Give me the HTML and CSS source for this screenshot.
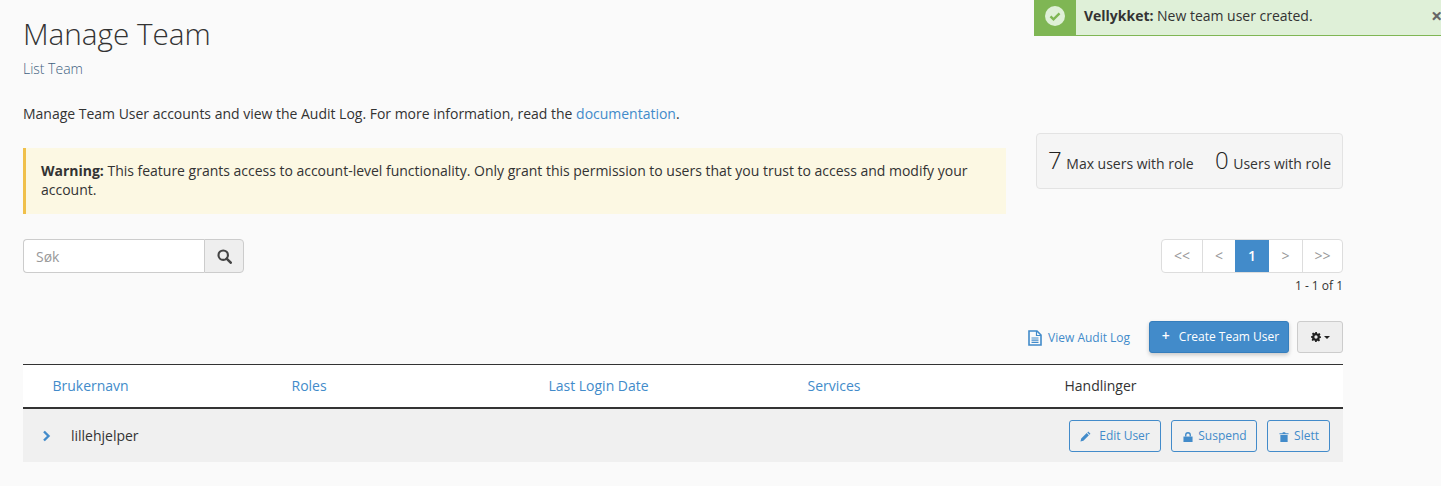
FILE: index.html
```html
<!DOCTYPE html>
<html lang="no">
<head>
<meta charset="utf-8">
<title>Manage Team</title>
<link rel="stylesheet" href="styles.css">
</head>
<body>
<div class="toast">
  <div class="toast-icon">
    <svg width="20" height="20" viewBox="0 0 20 20"><circle cx="10" cy="10" r="10" fill="#dff0d8"/><path d="M5.5 10.3l3 3 6-6" fill="none" stroke="#7fb654" stroke-width="2.4"/></svg>
  </div>
  <div class="toast-text"><strong>Vellykket:</strong> New team user created.</div>
  <div class="toast-close">×</div>
</div>
<main class="page">
  <h1 class="title">Manage Team</h1>
  <div class="subtitle">List Team</div>
  <p class="intro">Manage Team User accounts and view the Audit Log. For more information, read the <a href="#">documentation</a>.</p>
  <div class="notice-row">
    <div class="warning"><strong>Warning:</strong> This feature grants access to account-level functionality. Only grant this permission to users that you trust to access and modify your account.</div>
    <div class="stats">
      <span class="stat"><span class="stat-num">7</span> Max users with role</span>
      <span class="stat"><span class="stat-num">0</span> Users with role</span>
    </div>
  </div>
  <div class="search-row">
    <div class="search">
      <input class="search-input" type="text" placeholder="Søk">
      <button class="search-btn" type="button">
        <svg width="15" height="15" viewBox="0 0 14 14"><circle cx="5.8" cy="5.8" r="4.4" fill="none" stroke="#444" stroke-width="2"/><path d="M9 9l3.8 3.8" stroke="#444" stroke-width="2.4" stroke-linecap="round"/></svg>
      </button>
    </div>
    <div class="paging">
      <div class="pager">
        <span class="page-item first">&lt;&lt;</span>
        <span class="page-item prev">&lt;</span>
        <span class="page-item current">1</span>
        <span class="page-item next">&gt;</span>
        <span class="page-item last">&gt;&gt;</span>
      </div>
      <div class="page-count">1 - 1 of 1</div>
    </div>
  </div>
  <div class="actions">
    <a class="audit" href="#">
      <svg width="14" height="16" viewBox="0 0 14 16"><path d="M1 1h8l4 4v10H1z" fill="none" stroke="#428bca" stroke-width="1.6"/><path d="M8.5 1v4.5H13M3.5 8h7M3.5 10.2h7M3.5 12.4h7" fill="none" stroke="#428bca" stroke-width="1.2"/></svg>
      <span>View Audit Log</span>
    </a>
    <button class="create" type="button"><span class="create-label"><span class="plus">+</span>Create Team User</span></button>
    <button class="gear" type="button">
      <svg width="10" height="10" viewBox="0 0 24 24"><path fill="#222" d="M10 0h4l.7 3.4 2.3 1 2.9-1.9 2.8 2.8-1.9 2.9 1 2.3L24 10v4l-3.2.7-1 2.3 1.9 2.9-2.8 2.8-2.9-1.9-2.3 1L14 24h-4l-.7-3.2-2.3-1-2.9 1.9-2.8-2.8 1.9-2.9-1-2.3L0 14v-4l3.2-.7 1-2.3-1.9-2.9 2.8-2.8 2.9 1.9 2.3-1zM12 8a4 4 0 1 0 0 8 4 4 0 0 0 0-8z" fill-rule="evenodd"/></svg>
      <span class="caret"></span>
    </button>
  </div>
  <section class="table">
    <div class="thead">
      <a class="th th-name" href="#">Brukernavn</a>
      <a class="th th-roles" href="#">Roles</a>
      <a class="th th-login" href="#">Last Login Date</a>
      <a class="th th-services" href="#">Services</a>
      <span class="th th-actions">Handlinger</span>
    </div>
    <div class="row">
      <svg class="chev" width="9" height="12" viewBox="0 0 9 12"><path d="M2 1.5L6.5 6 2 10.500" fill="none" stroke="#428bca" stroke-width="2.400"/></svg>
      <span class="username">lillehjelper</span>
      <div class="row-actions">
        <button class="row-btn edit" type="button">
          <svg class="icon-low" width="11" height="11" viewBox="0 0 12 12"><path fill="#428bca" d="M0.500 11.500l.8-3.200 6-6 2.400 2.400-6 6zM8 1.600l1-1 2.400 2.400-1 1z"/></svg>
          <span class="btn-label">Edit User</span>
        </button>
        <button class="row-btn suspend" type="button">
          <svg class="icon-low" width="10" height="10" viewBox="0 0 10 11"><path fill="#428bca" d="M0 5h10v6H0z"/><path d="M2.500 5V3.300a2.500 2.500 0 0 1 5 0V5" fill="none" stroke="#428bca" stroke-width="1.500"/></svg>
          <span class="btn-label">Suspend</span>
        </button>
        <button class="row-btn delete" type="button">
          <svg class="icon-low" width="10" height="10" viewBox="0 0 10 11"><path fill="#428bca" d="M1 3.200h8V11H1zM0 1.500h3.200L3.800.3h2.400l.6 1.200H10v1H0z"/></svg>
          <span class="btn-label">Slett</span>
        </button>
      </div>
    </div>
  </section>
</main>
</body>
</html>
```
FILE: styles.css
```css
* { box-sizing: border-box; }
html, body { margin: 0; padding: 0; }
body {
  background: #fafafa;
  color: #333;
  font-family: "Open Sans", sans-serif;
  font-size: 14px;
  line-height: 20px;
  letter-spacing: -0.012px;
  height: 486px;
  overflow: hidden;
  position: relative;
}
a { color: #428bca; text-decoration: none; }
button { font-family: inherit; cursor: pointer; }

.toast {
  position: absolute;
  top: 0;
  left: 1034px;
  right: 0;
  height: 36px;
  display: flex;
  align-items: center;
  background: #dff0d8;
  border-bottom: 1px solid #7fb654;
}
.toast-icon {
  width: 42px;
  height: 36px;
  background: #7fb654;
  display: flex;
  align-items: center;
  justify-content: center;
  flex: none;
  margin-top: -1px;
  padding-bottom: 3px;
}
.toast-text { margin-left: 8px; flex: 1; margin-top: -3px; }
.toast-close { color: #666; font-weight: 700; font-size: 20px; width: 9px; margin-top: -3px; margin-right: 1px; }

.page { width: 1343px; padding-left: 23px; }
.title {
  margin: 0;
  padding-top: 16px;
  font-size: 29.700px;
  line-height: 36px;
  font-weight: 300;
  color: #333;
}
.subtitle { margin-top: 7px; color: #3f5f7f; line-height: 20px; font-size: 14px; font-weight: 300; }
.intro { margin: 25px 0 0; line-height: 20px; }

.notice-row { display: flex; justify-content: space-between; align-items: flex-start; margin-top: 9px; }
.warning {
  margin-top: 15px;
  width: 983px;
  height: 66px;
  padding: 13px 16px 0 15px;
  background: #fcf8e3;
  border-left: 3px solid #f0c04a;
  line-height: 19px;
}
.stats {
  width: 307px;
  height: 56px;
  background: #f5f5f5;
  border: 1px solid #e3e3e3;
  border-radius: 4px;
  display: flex;
  align-items: center;
  justify-content: space-between;
  padding: 2px 11px 0 11px;
}
.stat-num { font-size: 24px; font-weight: 300; color: #222; margin-right: 1px; }

.search-row { display: flex; justify-content: space-between; align-items: flex-start; margin-top: 25px; }
.search { display: flex; height: 34px; width: 221px; }
.search-input {
  flex: 1;
  min-width: 0;
  height: 34px;
  border: 1px solid #ccc;
  border-right: 0;
  border-radius: 4px 0 0 4px;
  background: #fff;
  padding: 0 12px;
  font: 14px "Open Sans", sans-serif;
  color: #333;
}
.search-input::placeholder { color: #999; opacity: 1; }
.search-btn {
  width: 40px;
  height: 34px;
  border: 1px solid #ccc;
  border-radius: 0 4px 4px 0;
  background: #eee;
  padding: 0;
  display: flex;
  align-items: center;
  justify-content: center;
}
.paging { display: flex; flex-direction: column; align-items: flex-end; }
.pager {
  display: flex;
  height: 34px;
  background: #fff;
  border: 1px solid #ddd;
  border-radius: 4px;
  overflow: hidden;
  color: #999;
}
.page-item {
  height: 32px;
  display: flex;
  align-items: center;
  justify-content: center;
  border-left: 1px solid #ddd;
}
.first { width: 40px; border-left: 0; }
.prev { width: 33px; }
.current { width: 34px; background: #428bca; color: #fff; border-left: 0; font-weight: 600; }
.next { width: 33px; border-left: 0; }
.last { width: 40px; }
.page-count { font-size: 12px; line-height: 18px; margin-top: 4px; }

.actions { display: flex; justify-content: flex-end; align-items: center; margin-top: 26px; height: 32px; }
.audit { display: flex; align-items: center; gap: 6px; font-size: 12px; margin-right: 19px; padding-top: 1px; }
.create {
  width: 140px;
  height: 32px;
  background: #428bca;
  border: 1px solid #357ebd;
  border-radius: 3px;
  color: #fff;
  font-size: 12px;
  padding: 0 0 0 3px;
  box-shadow: 0 2px 4px rgba(0,0,0,.2);
}
.create-label { position: relative; top: -2px; }
.plus { margin-right: 9px; font-size: 14px; font-weight: 600; }
.gear {
  width: 46px;
  height: 32px;
  margin-left: 8px;
  background: #eee;
  border: 1px solid #ccc;
  border-radius: 3px;
  padding: 0;
  display: flex;
  align-items: center;
  justify-content: center;
  gap: 3px;
}
.caret { width: 0; height: 0; border-left: 3.500px solid transparent; border-right: 3.500px solid transparent; border-top: 3.500px solid #222; }

.table { margin-top: 11px; }
.thead {
  display: flex;
  align-items: center;
  height: 45px;
  background: #fff;
  border-top: 1px solid #333;
  border-bottom: 2px solid #333;
}
.th { display: block; }
.th-name { margin-left: 29.500px; width: 239px; }
.th-roles { width: 257px; }
.th-login { width: 259px; }
.th-services { width: 257px; }
.th-actions { color: #333; }
.row {
  display: flex;
  align-items: center;
  height: 53px;
  background: #f0f0f0;
  padding: 0 13px 0 19px;
}
.chev { flex: none; }
.username { margin-left: 20px; }
.row-actions { margin-left: auto; display: flex; gap: 10px; }
.row-btn {
  height: 32px;
  background: transparent;
  border: 1px solid #428bca;
  border-radius: 3px;
  color: #428bca;
  font-size: 12px;
  padding: 0;
  display: flex;
  align-items: center;
  justify-content: center;
}
.icon-low { position: relative; top: 1px; }
.edit { width: 92px; gap: 8px; }
.suspend { width: 86px; gap: 5px; padding-left: 2px; }
.delete { width: 63px; gap: 5px; padding-left: 1px; }
```
